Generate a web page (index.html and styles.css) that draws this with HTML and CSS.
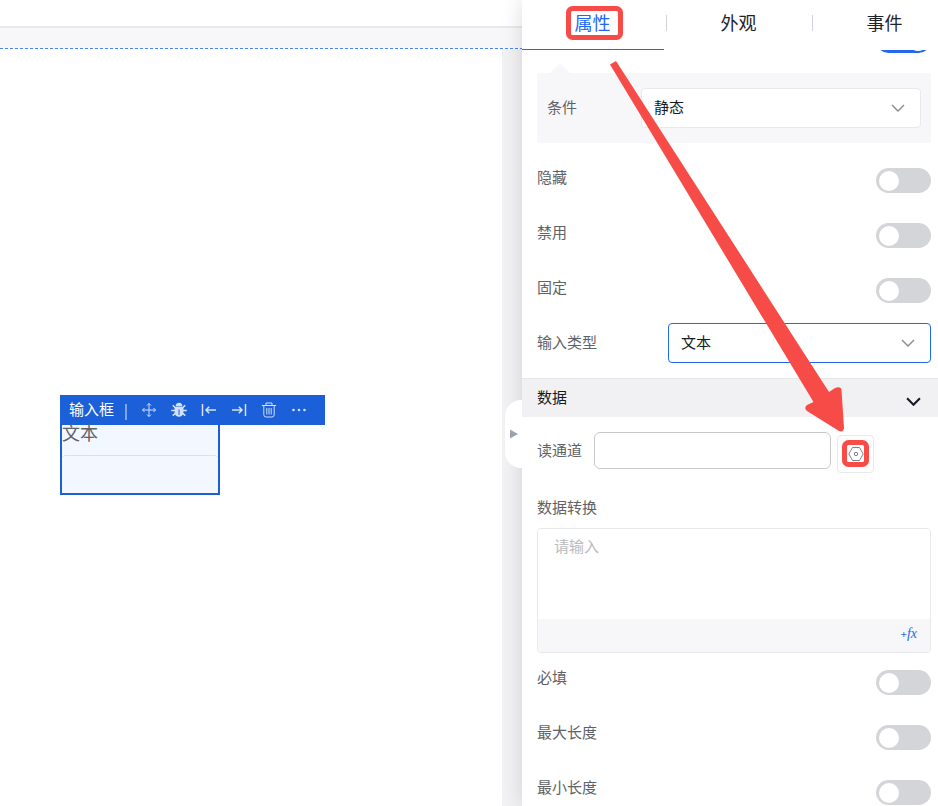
FILE: index.html
```
<!DOCTYPE html>
<html lang="zh-CN">
<head>
    <meta charset="UTF-8">
    <meta name="viewport" content="width=device-width, initial-scale=1.0">
    <title>输入框</title>
    <link rel="stylesheet" href="styles.css">
</head>
<body>
    <main class="workspace">
        <div class="top-bar"></div>
        <div class="ruler"></div>
        <div class="canvas">
            <div class="widget">
                <div class="toolbar">
                    <span class="toolbar-title">输入框</span>
                    <span class="toolbar-line"></span>
                    <button type="button" aria-label="移动">
                        <svg viewBox="0 0 16 16"><path d="M8 1.5v13M1.5 8h13M6 3.5l2-2 2 2M6 12.5l2 2 2-2M3.5 6l-2 2 2 2M12.5 6l2 2-2 2"/></svg>
                    </button>
                    <button type="button" aria-label="调试">
                        <svg viewBox="0 0 16 16" class="bug"><path class="fill" d="M4.6 4.4a3.4 3.6 0 0 1 6.800 0zM3.600 5h8.800v5.400a4.400 4.400 0 0 1-8.800 0z"/><path d="M4.500 6L1.800 3.200M11.500 6l2.700-2.800M4.500 8.500H.2M11.500 8.500h4.300M4.700 11l-3 2.700M11.300 11l3 2.700"/><path class="cut" d="M8 7.500v5.500"/></svg>
                    </button>
                    <button type="button" aria-label="左对齐">
                        <svg viewBox="0 0 16 16" class="bold"><path d="M1.5 2v12M15 8H5M8.2 4.8L5 8l3.200 3.200"/></svg>
                    </button>
                    <button type="button" aria-label="右对齐">
                        <svg viewBox="0 0 16 16" class="bold"><path d="M14.500 2v12M1 8h10M7.800 4.800L11 8l-3.200 3.200"/></svg>
                    </button>
                    <button type="button" aria-label="删除">
                        <svg viewBox="0 0 16 16"><path d="M.8 3.500h14.400M5 3.200V1h6v2.200M2.800 3.500v9.200q0 2.300 2.300 2.300h5.800q2.300 0 2.300-2.300V3.500M5.800 6v6.500M8 6v6.500M10.200 6v6.500"/></svg>
                    </button>
                    <button type="button" aria-label="更多">
                        <svg viewBox="0 0 16 16"><circle class="fill" cx="2.500" cy="8" r="1.300"/><circle class="fill" cx="8" cy="8" r="1.300"/><circle class="fill" cx="13.500" cy="8" r="1.300"/></svg>
                    </button>
                </div>
                <div class="widget-body">
                    <div class="widget-label">文本</div>
                    <div class="widget-input"></div>
                </div>
            </div>
        </div>
    </main>

    <aside class="panel">
        <button type="button" class="collapse" aria-label="收起">
            <svg viewBox="0 0 8 10"><path d="M0 0.5L8 5L0 9.5z"/></svg>
        </button>
        <nav class="tabs">
            <button type="button" class="tab active">属性</button>
            <button type="button" class="tab">外观</button>
            <button type="button" class="tab">事件</button>
        </nav>
        <form class="panel-body">
            <div class="group">
                <div class="row scrolled">
                    <input type="checkbox" class="switch" aria-label="启用" checked>
                </div>
                <div class="condition">
                    <label for="condition">条件</label>
                    <div class="select-box">
                        <select id="condition"><option>静态</option></select>
                        <svg viewBox="0 0 14 8"><path d="M1 1l6 6 6-6"/></svg>
                    </div>
                </div>
                <div class="row">
                    <label for="hide">隐藏</label>
                    <input type="checkbox" class="switch" id="hide">
                </div>
                <div class="row">
                    <label for="disable">禁用</label>
                    <input type="checkbox" class="switch" id="disable">
                </div>
                <div class="row">
                    <label for="fixed">固定</label>
                    <input type="checkbox" class="switch" id="fixed">
                </div>
                <div class="row">
                    <label for="type">输入类型</label>
                    <div class="select-box focus">
                        <select id="type"><option>文本</option></select>
                        <svg viewBox="0 0 14 8"><path d="M1 1l6 6 6-6"/></svg>
                    </div>
                </div>
            </div>
            <div class="section-title">
                <span>数据</span>
                <svg viewBox="0 0 14 8"><path d="M1 1l6 6 6-6"/></svg>
            </div>
            <div class="group">
                <div class="channel">
                    <label for="channel">读通道</label>
                    <input type="text" id="channel">
                    <button type="button" class="setting" aria-label="设置">
                        <svg viewBox="0 0 16 16"><path d="M4.5 1.5h7L15.2 8l-3.7 6.5h-7L.8 8z"/><circle cx="8" cy="8" r="1.7"/></svg>
                    </button>
                </div>
                <label class="block-label" for="convert">数据转换</label>
                <div class="editor">
                    <textarea id="convert" placeholder="请输入"></textarea>
                    <div class="editor-foot">
                        <button type="button" class="fx"><span>+</span>fx</button>
                    </div>
                </div>
                <div class="checks">
                    <div class="row">
                        <label for="required">必填</label>
                        <input type="checkbox" class="switch" id="required">
                    </div>
                    <div class="row">
                        <label for="max">最大长度</label>
                        <input type="checkbox" class="switch" id="max">
                    </div>
                    <div class="row">
                        <label for="min">最小长度</label>
                        <input type="checkbox" class="switch" id="min">
                    </div>
                </div>
            </div>
        </form>
        <!-- guide marks: tab -> channel setting -->
        <svg class="guide" viewBox="0 0 416 480">
            <rect x="46.5" y="8.5" width="52" height="29" rx="4"/>
            <rect x="322.5" y="442.5" width="22" height="22" rx="4"/>
            <path d="M88 64.5L94 61L307 392L313 388Q319 386 319.500 390L322 428Q321.500 432.500 317 431L285 411Q281.500 408 285 405L291.500 402z"/>
        </svg>
    </aside>
</body>
</html>
```

FILE: styles.css
```
* {
    box-sizing: border-box;
}
body {
    margin: 0;
    height: 100vh;
    display: flex;
    overflow: hidden;
    background: #fff;
    font-family: "Liberation Sans", "Noto Sans CJK SC", sans-serif;
    font-size: 15px;
    line-height: 20px;
    color: #606266;
}
button, input, select, textarea {
    font: inherit;
    margin: 0;
}
button {
    padding: 0;
    border: none;
    background: none;
    cursor: pointer;
}
svg {
    fill: none;
    stroke: currentColor;
}

/* canvas */
.workspace {
    flex: 1;
    min-width: 0;
    display: flex;
    flex-direction: column;
}
.top-bar {
    height: 28px;
    border-bottom: 2px solid #e9e9eb;
}
.ruler {
    height: 21px;
    background: repeating-linear-gradient(90deg, #4a86ea 0 3px, #f7f7fa 3px 5px) bottom / 100% 1px no-repeat #f7f7fa;
}
.canvas {
    flex: 1;
    position: relative;
    border-right: 20px solid #f2f2f5;
}
.widget {
    position: absolute;
    left: 60px;
    top: 346px;
}
.toolbar {
    display: flex;
    align-items: center;
    width: 265px;
    height: 30px;
    padding-left: 9px;
    background: #1b5fd9;
    color: #d3e1fb;
}
.toolbar-title {
    color: #fff;
}
.toolbar-line {
    width: 2px;
    height: 16px;
    margin: 4px 7px 0 11px;
    background: #7ea5ea;
}
.toolbar button {
    display: flex;
    justify-content: center;
    width: 30px;
    color: inherit;
}
.toolbar svg {
    width: 16px;
    height: 16px;
}
.toolbar .bold {
    stroke-width: 1.5;
}
.toolbar .fill {
    fill: currentColor;
    stroke: none;
}
.toolbar .bug {
    stroke-width: 1.6;
}
.toolbar .cut {
    stroke: #1b5fd9;
    stroke-width: 1;
}
.widget-body {
    width: 160px;
    height: 70px;
    border: 2px solid #1b5fd9;
    border-top: none;
    background: #f3f7ff;
}
.widget-label {
    height: 30px;
    font-size: 18px;
    line-height: 18px;
}
.widget-input {
    height: 38px;
    border-top: 1px solid #dcdfe6;
    border-radius: 4px;
}

/* right panel */
.panel {
    position: relative;
    flex: 0 0 416px;
    min-width: 0;
    display: flex;
    flex-direction: column;
    background: #fff;
    box-shadow: 0 0 20px rgba(0, 0, 0, 0.14);
}
.collapse {
    position: absolute;
    left: -17px;
    top: 400px;
    display: flex;
    align-items: center;
    width: 17px;
    height: 68px;
    padding-left: 5px;
    border-radius: 16px 0 0 16px;
    background: #fff;
}
.collapse svg {
    width: 8px;
    height: 10px;
    fill: #9ca3af;
    stroke: none;
}
.tabs {
    flex: none;
    display: flex;
    height: 50px;
    overflow: hidden;
}
.tab {
    position: relative;
    flex: 0 0 146px;
    padding: 0 5px 2px 0;
    font-size: 18px;
    color: #1f2329;
}
.tab::after {
    content: "";
    position: absolute;
    right: 1px;
    top: 15px;
    height: 16px;
    border-right: 1px solid #d0d3d9;
}
.tab.active {
    color: #2468f2;
}
.tab.active::before {
    content: "";
    position: absolute;
    left: 0;
    right: 4px;
    bottom: 0;
    height: 1px;
    background: #2468f2;
}
.panel-body {
    flex: 1;
    min-height: 0;
    overflow: hidden;
}
.group {
    padding: 0 7px 0 15px;
}
.row {
    display: flex;
    justify-content: space-between;
    align-items: center;
    height: 55px;
}
.row .switch {
    margin-top: 6px;
}
.row.scrolled {
    height: 45px;
    margin-top: -22px;
    align-items: flex-start;
    justify-content: flex-end;
}
.row.scrolled .switch {
    margin-top: 0;
}
.row .select-box {
    width: 263px;
}
.switch {
    appearance: none;
    width: 55px;
    height: 25px;
    padding: 3px;
    border-radius: 13px;
    background: #d4d5d9;
    cursor: pointer;
}
.switch::before {
    content: "";
    display: block;
    width: 20px;
    height: 20px;
    border-radius: 50%;
    background: #fff;
}
.switch:checked {
    background: #2468f2;
}
.switch:checked::before {
    margin-left: 29px;
}
.condition {
    position: relative;
    display: flex;
    align-items: center;
    justify-content: space-between;
    height: 70px;
    margin-bottom: 7px;
    padding: 0 10px;
    border-radius: 3px;
    background: #f7f7fa;
}
.condition::before {
    content: "";
    position: absolute;
    left: 13px;
    top: -10px;
    border: 10px solid transparent;
    border-top: none;
    border-bottom-color: #f7f7fa;
}
.condition .select-box {
    width: 280px;
}
.select-box {
    position: relative;
    color: #85888f;
}
.select-box select {
    appearance: none;
    display: block;
    width: 100%;
    height: 40px;
    padding: 0 12px;
    border: 1px solid #e8e9eb;
    border-radius: 4px;
    background: #fff;
    color: #151b26;
}
.select-box.focus select {
    border-color: #2468f2;
}
.select-box svg {
    position: absolute;
    right: 16px;
    top: 16px;
    width: 14px;
    height: 8px;
    stroke-width: 1.4;
    pointer-events: none;
}
.section-title {
    display: flex;
    align-items: center;
    justify-content: space-between;
    height: 39px;
    margin-top: 8px;
    padding: 0 17px 0 15px;
    border-top: 1px solid #e5e6e8;
    background: #f1f1f4;
    color: #151b26;
}
.section-title svg {
    width: 15px;
    height: 9px;
    margin-top: 6px;
    stroke-width: 2;
}
.channel {
    display: flex;
    align-items: center;
    height: 67px;
}
.channel input {
    width: 237px;
    height: 37px;
    margin: 0 6px 0 12px;
    padding: 0 10px;
    border: 1px solid #c8c9cc;
    border-radius: 6px;
}
.setting {
    display: flex;
    align-items: center;
    justify-content: center;
    width: 37px;
    height: 38px;
    margin-top: 7px;
    border: 1px solid #e8e9eb;
    border-radius: 4px;
    color: #7d8087;
}
.setting svg {
    width: 16px;
    height: 16px;
}
.block-label {
    display: block;
    margin: 14px 0 10px;
}
.editor {
    height: 125px;
    border: 1px solid #e8e9eb;
    border-radius: 4px;
    overflow: hidden;
}
.editor textarea {
    display: block;
    width: 100%;
    height: 90px;
    padding: 8px 16px;
    border: none;
    outline: none;
    resize: none;
}
.editor textarea::placeholder {
    color: #b8babf;
}
.editor-foot {
    display: flex;
    justify-content: flex-end;
    height: 33px;
    padding: 0 13px 4px 0;
    background: #f7f7fa;
}
.fx {
    font-family: "Liberation Serif", serif;
    font-size: 14px;
    font-style: italic;
    color: #2468f2;
}
.fx span {
    font-size: 11px;
    font-weight: bold;
}
.checks {
    margin-top: -3px;
}
.checks .row .switch {
    margin-top: 9px;
}

.guide {
    position: absolute;
    left: 0;
    top: 0;
    width: 416px;
    height: 480px;
    stroke: #f64b46;
    stroke-width: 5;
    pointer-events: none;
}
.guide path {
    fill: #f64b46;
    stroke: none;
}
```
